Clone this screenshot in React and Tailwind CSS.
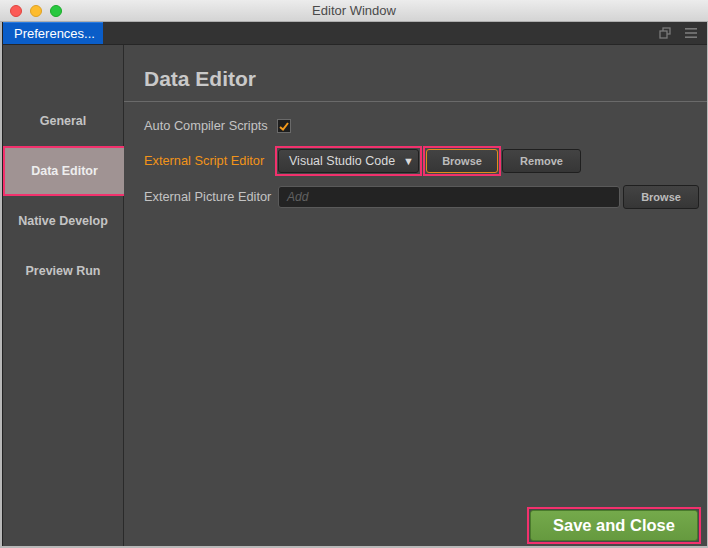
import React from "react";

const font = { fontFamily: '"Liberation Sans", Arial, sans-serif' };

function SideItem({ label, active }) {
  if (active) {
    return (
      <div className="h-[50px] w-[123px] border-2 border-[#f2316d] bg-[#a09393] flex items-center justify-center text-[12.5px] font-bold text-[#eeeeee]">
        {label}
      </div>
    );
  }
  return (
    <div className="h-[50px] flex items-center justify-center text-[12.5px] font-bold text-[#c4c4c4]">
      {label}
    </div>
  );
}

function Btn({ children, className = "" }) {
  return (
    <button
      className={
        "h-[24px] rounded-[3px] border border-[#1f1f1f] bg-gradient-to-b from-[#434343] to-[#363636] text-[11px] font-bold text-[#bcbcbc] " +
        className
      }
    >
      {children}
    </button>
  );
}

export default function App() {
  return (
    <div
      className="w-[708px] h-[548px] flex flex-col bg-[#b9b9b9] overflow-hidden"
      style={font}
    >
      {/* title bar */}
      <div className="relative h-[22px] shrink-0 bg-gradient-to-b from-[#ececec] to-[#d4d4d4] border-b border-[#aeaeae] flex items-center justify-center">
        <div className="absolute left-[10px] top-[5px] flex gap-[8px]">
          <span className="w-[12px] h-[12px] rounded-full bg-[#fc5b57] border border-[#e0443e]" />
          <span className="w-[12px] h-[12px] rounded-full bg-[#fdbc2e] border border-[#dea123]" />
          <span className="w-[12px] h-[12px] rounded-full bg-[#28c840] border border-[#1aab29]" />
        </div>
        <span className="text-[13px] text-[#4a4a4a]">Editor Window</span>
      </div>

      <div className="flex-1 flex flex-col ml-[2px] mr-[1px] mb-[2px] bg-[#242424] border-l border-[#222]">
        {/* tab bar */}
        <div className="h-[23px] shrink-0 bg-[#333333] border-b border-[#262626] flex items-end">
          <div className="w-[100px] h-[22px] bg-[#0a5dc8] border-t border-[#2a7be0] flex items-center pl-[11px] text-[13px] text-white">
            Preferences...
          </div>
          <div className="flex-1" />
          <div className="flex items-center gap-[14px] h-full pr-[10px] text-[#7a7a7a]">
            <svg width="12" height="12" viewBox="0 0 12 12" fill="none" stroke="currentColor" strokeWidth="1.3">
              <rect x="4" y="1" width="7" height="6" />
              <rect x="1" y="4" width="7" height="7" fill="#333333" />
            </svg>
            <svg width="12" height="10" viewBox="0 0 12 10" fill="currentColor">
              <rect x="0" y="0" width="12" height="1.6" />
              <rect x="0" y="4.2" width="12" height="1.6" />
              <rect x="0" y="8.4" width="12" height="1.6" />
            </svg>
          </div>
        </div>

        {/* body */}
        <div className="flex-1 flex">
          <div className="w-[121px] shrink-0 bg-[#464646] border-r border-[#2a2a2a] pt-[51px] flex flex-col">
            <SideItem label="General" />
            <SideItem label="Data Editor" active />
            <SideItem label="Native Develop" />
            <SideItem label="Preview Run" />
          </div>

          <div className="flex-1 bg-[#484848] flex flex-col">
            <div className="h-[57px] shrink-0 border-b border-[#6a6a6a] flex items-center pt-[11px] pl-[20px] text-[21px] font-bold text-[#c9c9c9]">
              Data Editor
            </div>

            <div className="pl-[20px] pt-[15px] flex flex-col text-[12.8px] text-[#c4c4c4]">
              <div className="h-[18px] flex items-center">
                <span className="w-[133px]">Auto Compiler Scripts</span>
                <span className="w-[14px] h-[14px] bg-[#1e1e1e] border border-[#6a6a6a] flex items-center justify-center">
                  <svg width="10" height="9" viewBox="0 0 10 9" fill="none" stroke="#f39a1b" strokeWidth="2">
                    <path d="M1 5 L4 7.5 L9 1" />
                  </svg>
                </span>
              </div>

              <div className="mt-[11px] h-[30px] flex items-center">
                <span className="w-[131px] text-[#f29419]">External Script Editor</span>
                <span className="border-2 border-[#f2316d] p-[1px] flex">
                  <Btn className="w-[141px] text-left pl-[10px] text-[12.5px] font-normal text-[#dadada] flex items-center gap-[8px]">
                    Visual Studio Code
                    <span className="text-[11px]">▼</span>
                  </Btn>
                </span>
                <span className="ml-[1px] border-2 border-[#f2316d] p-[1px] flex">
                  <Btn className="w-[72px] border-[#e48a1a]">Browse</Btn>
                </span>
                <Btn className="ml-[1px] w-[79px]">Remove</Btn>
              </div>

              <div className="mt-[9px] h-[24px] flex items-center">
                <span className="w-[134px]">External Picture Editor</span>
                <div className="w-[342px] h-[22px] rounded-[3px] bg-[#232323] border border-[#5a5a5a] flex items-center pl-[8px] text-[12px] italic text-[#606060]">
                  Add
                </div>
                <Btn className="ml-[3px] w-[76px]">Browse</Btn>
              </div>
            </div>

            <div className="flex-1" />
            <div className="flex justify-end pr-[6px] pb-[2px]">
              <span className="border-2 border-[#f2316d] p-[1px] flex">
                <button className="w-[168px] h-[31px] rounded-[3px] bg-gradient-to-b from-[#74a94b] to-[#669a3f] border border-[#4a7a2c] text-[16.5px] font-bold text-white">
                  Save and Close
                </button>
              </span>
            </div>
          </div>
        </div>
      </div>
    </div>
  );
}
